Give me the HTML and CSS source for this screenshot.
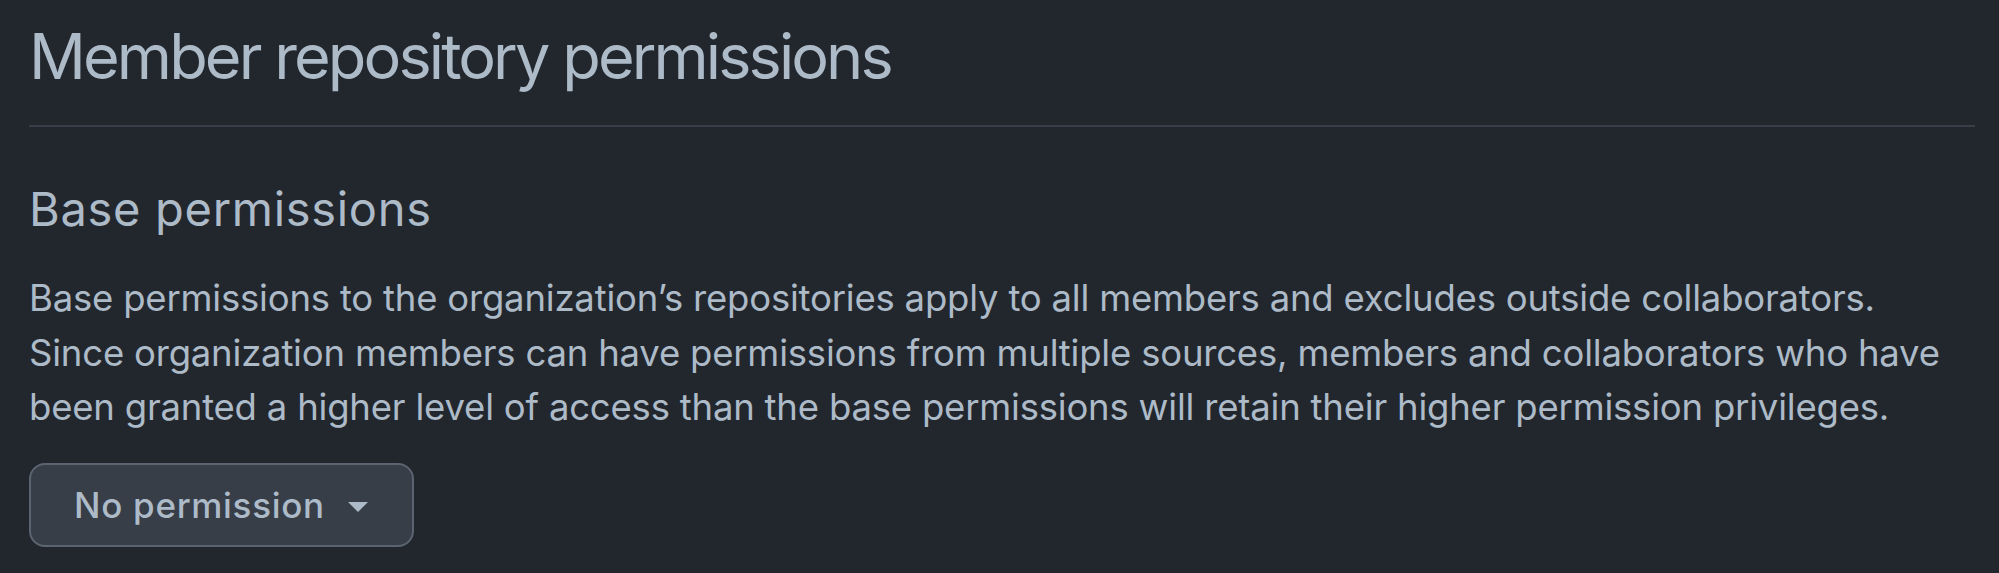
FILE: index.html
```html
<!DOCTYPE html>
<html lang="en">
<head>
<meta charset="utf-8">
<title>Member repository permissions</title>
<link rel="stylesheet" href="styles.css">
</head>
<body>
<main class="page">
  <div class="subhead">
    <h2 class="subhead-heading">Member repository permissions</h2>
  </div>
  <section class="base">
    <h3 class="section-title">Base permissions</h3>
    <p class="desc">Base permissions to the organization’s repositories apply to all members and excludes outside collaborators. Since organization members can have permissions from multiple sources, members and collaborators who have been granted a higher level of access than the base permissions will retain their higher permission privileges.</p>
    <button class="btn" type="button">
      <span class="btn-label">No permission</span>
      <span class="caret"></span>
    </button>
  </section>
</main>
</body>
</html>
```
FILE: styles.css
```css
html, body {
  margin: 0;
  padding: 0;
  background: #22272e;
}

body {
  font-family: Inter, "Noto Sans", "Liberation Sans", sans-serif;
  color: #adbac7;
}

.page {
  padding: 17px 24px 0 29px;
}

.subhead {
  border-bottom: 2px solid #373e47;
  padding-bottom: 29px;
}

.subhead-heading {
  margin: 0;
  font-size: 63px;
  line-height: 79px;
  font-weight: 400;
  letter-spacing: -2.9px;
  color: #adbac7;
}

.section-title {
  margin: 52px 0 0;
  font-size: 47px;
  line-height: 59px;
  font-weight: 400;
  letter-spacing: 0.7px;
  color: #adbac7;
}

.desc {
  margin: 33px 0 0;
  font-size: 36.5px;
  line-height: 54.5px;
  letter-spacing: -0.2px;
}

.btn {
  margin-top: 28px;
  display: inline-flex;
  align-items: center;
  gap: 23px;
  height: 84px;
  padding: 0 44px 0 43px;
  background: #373e47;
  border: 2px solid #5b6470;
  border-radius: 16px;
  color: #adbac7;
  font-family: inherit;
  font-size: 35px;
  font-weight: 500;
  letter-spacing: 0.7px;
  cursor: pointer;
}

.caret {
  width: 0;
  height: 0;
  border-left: 10px solid transparent;
  border-right: 10px solid transparent;
  border-top: 10px solid #adbac7;
  margin-top: 4px;
}
```
